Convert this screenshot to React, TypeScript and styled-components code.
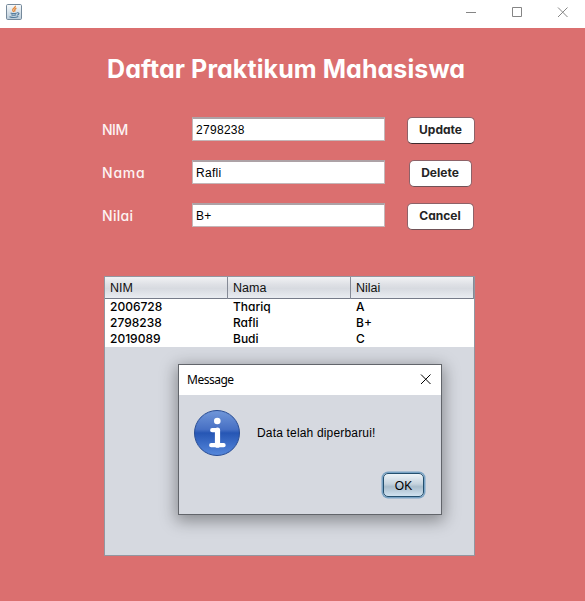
import React from "react";
import styled, { createGlobalStyle } from "styled-components";

const GlobalStyle = createGlobalStyle`
  * { box-sizing: border-box; }
  body { margin: 0; background: #db6f6f; overflow: hidden; }
`;

const geometric = `font-family: Inter, "Open Sans", sans-serif; font-feature-settings: "cv11" 1;`;
const arial = `font-family: "Liberation Sans", Arial, sans-serif;`;

const Window = styled.div`
  position: relative;
  width: 585px;
  height: 601px;
  background: #db6f6f;
`;

const TitleBar = styled.header`
  display: flex;
  justify-content: space-between;
  height: 28px;
  padding: 4px 17px 0 6px;
  background: #fff;
`;

const WindowControls = styled.div`
  display: flex;
  gap: 35px;
  padding-top: 2px;
  svg { display: block; }
`;

const Title = styled.h1`
  ${geometric}
  margin: 0;
  padding: 25px 0 0 107px;
  height: 89px;
  font-size: 25px;
  line-height: 32px;
  font-weight: 700;
  letter-spacing: 0.08px;
  color: #fff;
  white-space: nowrap;
`;

const Form = styled.form`
  display: grid;
  grid-template-columns: 90px 193px 112px;
  grid-auto-rows: 43px;
  padding-left: 102px;
`;

const Label = styled.label<{ $spacing: number }>`
  ${geometric}
  padding-top: 2px;
  font-size: 14px;
  line-height: 21px;
  font-weight: 500;
  letter-spacing: ${(p) => p.$spacing}px;
  color: #fdf3f3;
`;

const Field = styled.input`
  ${arial}
  width: 193px;
  height: 24px;
  margin: 0;
  padding: 0 0 0 3px;
  border: 1px solid #c4b6b8;
  border-top: 2px solid #ada2a6;
  border-radius: 0;
  background: #fff;
  color: #000;
  font-size: 12px;
  letter-spacing: 0.3px;
  outline: none;
`;

const ActionButton = styled.button<{ $width: number; $offset: number; $dark?: boolean }>`
  ${geometric}
  width: ${(p) => p.$width}px;
  height: 27px;
  margin-left: ${(p) => p.$offset}px;
  padding: 0 1px 1px 0;
  border: 1px solid #8d6268;
  border-bottom: 1px solid ${(p) => (p.$dark ? "#3e292d" : "#705257")};
  border-radius: 5px;
  background: #fff;
  color: #252525;
  font-size: 12px;
  line-height: 20px;
  font-weight: 700;
`;

const TablePanel = styled.section`
  display: flex;
  flex-direction: column;
  width: 371px;
  height: 280px;
  margin: 30px 0 0 104px;
  border: 1px solid #9396a0;
  background: #d6d9e0;
`;

const HeaderRow = styled.div`
  ${arial}
  display: grid;
  grid-template-columns: 123px 123px 123px;
  height: 22px;
  border-bottom: 1px solid #767b89;
  background: linear-gradient(#f1f2f4 0%, #dfe1e6 35%, #d7dae0 55%, #e9ecf1 100%);
`;

const HeaderCell = styled.div`
  padding-left: 5px;
  border-right: 1px solid #858a96;
  font-size: 12.5px;
  line-height: 22px;
  color: #101010;
`;

const Row = styled.div`
  ${geometric}
  display: grid;
  grid-template-columns: 123px 123px 123px;
  height: 16px;
  padding-left: 5px;
  background: #fff;
  color: #000;
  font-size: 12px;
  line-height: 16px;
  font-weight: 500;
`;

const Dialog = styled.div`
  ${arial}
  position: absolute;
  left: 178px;
  top: 364px;
  width: 264px;
  height: 151px;
  border: 1px solid #62656b;
  background: #d6d9e0;
  box-shadow: 0 4px 15px 2px rgba(0, 0, 0, 0.36);
  color: #000;
  font-size: 12px;
`;

const DialogBar = styled.div`
  display: flex;
  align-items: center;
  justify-content: space-between;
  height: 30px;
  padding: 0 10px 0 8px;
  background: #fff;
  font-family: "Noto Sans", sans-serif;
  font-size: 12px;
  letter-spacing: -0.5px;
  line-height: 28px;
  svg { margin-bottom: 2px; }
`;

const DialogBody = styled.div`
  display: flex;
  align-items: center;
  gap: 16px;
  padding: 14px 0 0 14px;
  letter-spacing: 0.17px;
`;

const DialogFooter = styled.div`
  display: flex;
  justify-content: flex-end;
  padding: 16px 17px 0 0;
`;

const OkButton = styled.button`
  ${arial}
  width: 41px;
  height: 24px;
  padding: 1px 0 0;
  border: 1px solid #24506f;
  border-radius: 5px;
  background: linear-gradient(#edf3f8 0%, #c5d3de 45%, #a9bdcc 58%, #d0e2f0 100%);
  box-shadow: 0 0 0 1.5px #79a3c5;
  color: #000;
  font-size: 12px;
`;

const JavaIcon = () => (
  <svg width="16" height="16" viewBox="0 0 16 16">
    <defs>
      <linearGradient id="tile" x1="0" y1="0" x2="0" y2="1">
        <stop offset="0" stopColor="#f9fbfc" />
        <stop offset="1" stopColor="#b9cbd9" />
      </linearGradient>
    </defs>
    <rect x=".5" y=".5" width="15" height="15" rx="1.2" fill="url(#tile)" stroke="#75899b" />
    <path d="M9.4 1.8c.6 1.8-3.4 2.6-2.7 4.5.2.6.8 1 1 1.7M10.4 4.2C8.7 5 8.2 5.7 8.9 7.6" fill="none" stroke="#e58a3d" strokeWidth="1.3" />
    <path d="M4.6 8.9c1.5.6 4.6.6 6.2 0M5.3 10.7c1.3.5 3.6.5 4.8 0M11 8.8c2.8-.5 2.4 2-.2 2.4M3.5 12.7c2.4.9 6.5.9 8.8-.1" fill="none" stroke="#527b9c" strokeWidth="1.1" />
  </svg>
);

const InfoIcon = () => (
  <svg width="48" height="48" viewBox="0 0 48 48">
    <defs>
      <linearGradient id="ball" x1="0" y1="0" x2="0" y2="1">
        <stop offset="0" stopColor="#7197d9" />
        <stop offset=".42" stopColor="#4770c4" />
        <stop offset=".5" stopColor="#2656b4" />
        <stop offset="1" stopColor="#5688dc" />
      </linearGradient>
    </defs>
    <circle cx="24" cy="24" r="22.5" fill="url(#ball)" stroke="#294d94" />
    <circle cx="24.3" cy="12" r="3.3" fill="#fff" />
    <path d="M19.2 21.2h5.4v15M18.2 36.2h12.4" fill="none" stroke="#fff" strokeWidth="4.2" strokeLinecap="round" strokeLinejoin="round" />
    <path d="M24.5 21.2v15" stroke="#fff" strokeWidth="5.2" strokeLinecap="round" />
  </svg>
);

const MinimizeIcon = () => (
  <svg width="11" height="13" viewBox="0 0 11 13"><path d="M1 6.5h10" stroke="#858585" /></svg>
);
const MaximizeIcon = () => (
  <svg width="11" height="13" viewBox="0 0 11 13"><path d="M1.5 1.5h9v9h-9z" fill="none" stroke="#858585" /></svg>
);
const CloseIcon = ({ color }: { color: string }) => (
  <svg width="11" height="13" viewBox="0 0 11 13"><path d="M1 1.5l9.5 9.5M10.5 1.5l-9.5 9.5" stroke={color} strokeWidth="1" /></svg>
);

const fields = [
  { label: "NIM", value: "2798238", action: "Update", width: 68, offset: 22, spacing: -0.5, dark: true },
  { label: "Nama", value: "Rafli", action: "Delete", width: 63, offset: 24, spacing: 0.8, dark: false },
  { label: "Nilai", value: "B+", action: "Cancel", width: 67, offset: 22, spacing: 0.3, dark: false },
];

const rows = [
  ["2006728", "Thariq", "A"],
  ["2798238", "Rafli", "B+"],
  ["2019089", "Budi", "C"],
];

export default function App() {
  return (
    <Window>
      <GlobalStyle />
      <TitleBar>
        <JavaIcon />
        <WindowControls>
          <MinimizeIcon />
          <MaximizeIcon />
          <CloseIcon color="#858585" />
        </WindowControls>
      </TitleBar>
      <Title>Daftar Praktikum Mahasiswa</Title>
      <Form onSubmit={(e) => e.preventDefault()}>
        {fields.map((f) => (
          <React.Fragment key={f.label}>
            <Label htmlFor={f.label} $spacing={f.spacing}>{f.label}</Label>
            <Field id={f.label} defaultValue={f.value} />
            <ActionButton type="button" $width={f.width} $offset={f.offset} $dark={f.dark}>{f.action}</ActionButton>
          </React.Fragment>
        ))}
      </Form>
      <TablePanel>
        <HeaderRow>
          <HeaderCell>NIM</HeaderCell>
          <HeaderCell>Nama</HeaderCell>
          <HeaderCell>Nilai</HeaderCell>
        </HeaderRow>
        {rows.map((r) => (
          <Row key={r[0]}>
            {r.map((c) => <span key={c}>{c}</span>)}
          </Row>
        ))}
      </TablePanel>
      <Dialog role="dialog">
        <DialogBar>
          Message
          <CloseIcon color="#000" />
        </DialogBar>
        <DialogBody>
          <InfoIcon />
          <span>Data telah diperbarui!</span>
        </DialogBody>
        <DialogFooter>
          <OkButton>OK</OkButton>
        </DialogFooter>
      </Dialog>
    </Window>
  );
}
